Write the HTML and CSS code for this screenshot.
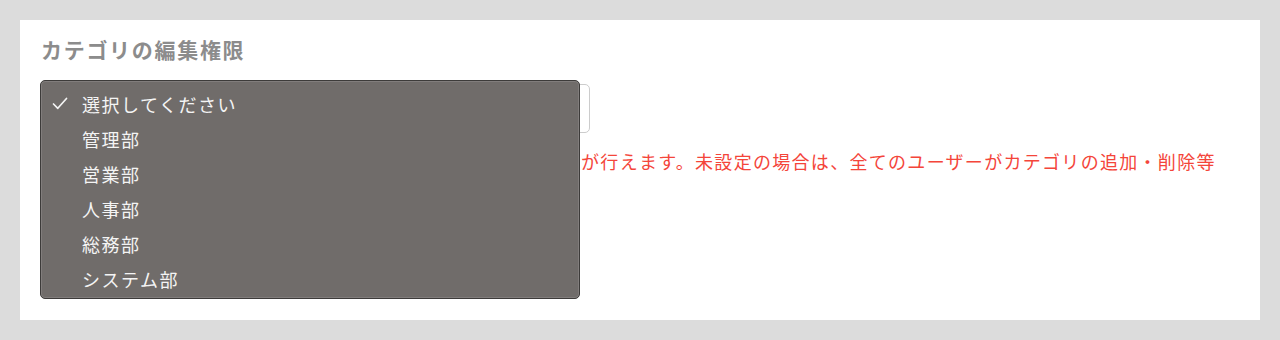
FILE: index.html
```html
<!DOCTYPE html>
<html lang="ja">
<head>
<meta charset="utf-8">
<link rel="stylesheet" href="styles.css">
</head>
<body>
<div class="card">
  <h2 class="title">カテゴリの編集権限</h2>
  <div class="select"><span class="select-text">選択してください</span></div>
  <p class="note">選択した部署に所属するユーザーのみカテゴリの追加・削除等が行えます。未設定の場合は、全てのユーザーがカテゴリの追加・削除等</p>
  <ul class="menu">
    <li class="item checked"><svg class="check" width="16" height="13" viewBox="0 0 16 13"><polyline points="1.5,7 5.8,11.3 14.5,1.5" fill="none" stroke="#f4f4f4" stroke-width="1.7" stroke-linecap="round" stroke-linejoin="round"/></svg>選択してください</li>
    <li class="item">管理部</li>
    <li class="item">営業部</li>
    <li class="item">人事部</li>
    <li class="item">総務部</li>
    <li class="item">システム部</li>
  </ul>
</div>
</body>
</html>
```
FILE: styles.css
```css
html, body {
  margin: 0;
  padding: 0;
}
body {
  background: #dcdcdc;
  font-family: "Noto Sans CJK JP", "Noto Sans", sans-serif;
  width: 1280px;
  height: 340px;
  overflow: hidden;
}
.card {
  position: relative;
  margin: 20px;
  height: 300px;
  box-sizing: border-box;
  background: #ffffff;
  padding: 15px 20px 0 21px;
}
.title {
  margin: 0 0 20px 0;
  font-size: 21px;
  line-height: 29px;
  font-weight: 700;
  color: #8c8c8c;
  letter-spacing: 1.7px;
}
.select {
  width: 550px;
  height: 49px;
  box-sizing: border-box;
  margin-left: -1px;
  border: 1px solid #cccccc;
  border-radius: 5px;
  display: flex;
  align-items: center;
  padding-left: 14px;
}
.select-text {
  font-size: 17px;
  color: #333;
}
.note {
  margin: 15px 0 0 0;
  font-size: 18px;
  line-height: 26px;
  letter-spacing: 1.3px;
  color: #f4453a;
  white-space: nowrap;
}
.menu {
  position: absolute;
  left: 20px;
  top: 60px;
  width: 540px;
  height: 219px;
  box-sizing: border-box;
  margin: 0;
  padding: 5px 0 2px 0;
  list-style: none;
  background: #706c6a;
  border: 1px solid #3d3b3a;
  border-radius: 5px;
  box-shadow: inset 0 0 0 1px rgba(255,255,255,0.12);
}
.item {
  position: relative;
  height: 35px;
  display: flex;
  align-items: center;
  padding-left: 41px;
  font-size: 18px;
  letter-spacing: 1.5px;
  color: #f4f4f4;
}
.check {
  position: absolute;
  left: 11px;
  top: 11px;
}
```
